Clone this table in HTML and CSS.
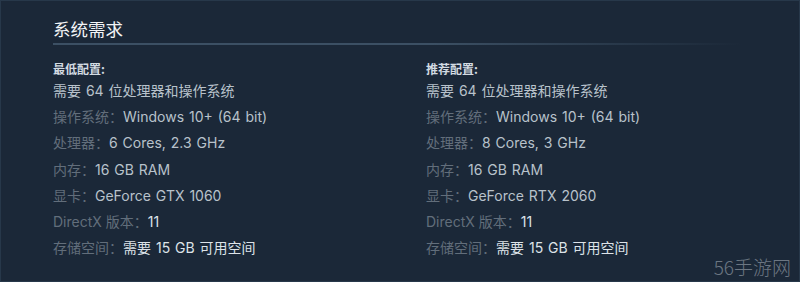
FILE: index.html
```html
<!DOCTYPE html>
<html lang="zh-CN">
<head>
<meta charset="utf-8">
<title>系统需求</title>
<link rel="stylesheet" href="styles.css">
</head>
<body>
<div class="frame">
  <section class="sysreq">
    <h2 class="title">系统需求</h2>
    <div class="rule"></div>
    <div class="cols">
      <div class="col">
        <div class="col-head">最低配置:</div>
        <ul class="list">
          <li class="row">需要 64 位处理器和操作系统</li>
          <li class="row"><span class="lbl">操作系统：</span>Windows 10+ (64 bit)</li>
          <li class="row"><span class="lbl">处理器：</span>6 Cores, 2.3 GHz</li>
          <li class="row"><span class="lbl">内存：</span>16 GB RAM</li>
          <li class="row"><span class="lbl">显卡：</span>GeForce GTX 1060</li>
          <li class="row"><span class="lbl">DirectX 版本：</span><span class="hi">11</span></li>
          <li class="row"><span class="lbl">存储空间：</span><span class="hi">需要 15 GB 可用空间</span></li>
        </ul>
      </div>
      <div class="col">
        <div class="col-head">推荐配置:</div>
        <ul class="list">
          <li class="row">需要 64 位处理器和操作系统</li>
          <li class="row"><span class="lbl">操作系统：</span>Windows 10+ (64 bit)</li>
          <li class="row"><span class="lbl">处理器：</span>8 Cores, 3 GHz</li>
          <li class="row"><span class="lbl">内存：</span>16 GB RAM</li>
          <li class="row"><span class="lbl">显卡：</span>GeForce RTX 2060</li>
          <li class="row"><span class="lbl">DirectX 版本：</span><span class="hi">11</span></li>
          <li class="row"><span class="lbl">存储空间：</span><span class="hi">需要 15 GB 可用空间</span></li>
        </ul>
      </div>
    </div>
  </section>
  <div class="watermark">56手游网</div>
</div>
</body>
</html>
```

FILE: styles.css
```css
html, body {
  margin: 0;
  padding: 0;
  background: #1b2838;
}
body {
  width: 800px;
  height: 282px;
  overflow: hidden;
  font-family: Inter, "Noto Sans CJK SC", sans-serif;
}
.frame {
  position: relative;
  box-sizing: border-box;
  width: 800px;
  height: 282px;
  border: 1px solid #27384a;
  background: #1b2838;
  padding: 13px 0 0 52px;
}
.title {
  margin: 0;
  font-size: 17.5px;
  font-weight: normal;
  line-height: 29px;
  color: #f2f4f6;
  font-family: "Noto Sans CJK SC", sans-serif;
}
.rule {
  width: 690px;
  height: 2px;
  background: linear-gradient(to right, #3c5064 0%, #3c5064 55%, rgba(60, 80, 100, 0) 100%);
}
.cols {
  display: grid;
  grid-template-columns: 373px 373px;
  margin-top: 15px;
}
.col-head {
  font-size: 12px;
  font-weight: bold;
  line-height: 18px;
  color: #d3dbe2;
  font-family: "Noto Sans CJK SC", sans-serif;
}
.list {
  list-style: none;
  margin: 0;
  padding: 0;
}
.row {
  font-size: 14px;
  line-height: 26.2px;
  color: #b8c2cb;
  white-space: nowrap;
  word-spacing: 1px;
}
.lbl {
  color: #626e7b;
  word-spacing: 0;
}
.hi {
  color: #dde3e8;
}
.watermark {
  position: absolute;
  right: 8px;
  bottom: 2px;
  font-size: 19px;
  line-height: 24px;
  font-family: "Noto Sans CJK SC", sans-serif;
  font-weight: 300;
  color: rgba(190, 196, 204, 0.5);
}
```
